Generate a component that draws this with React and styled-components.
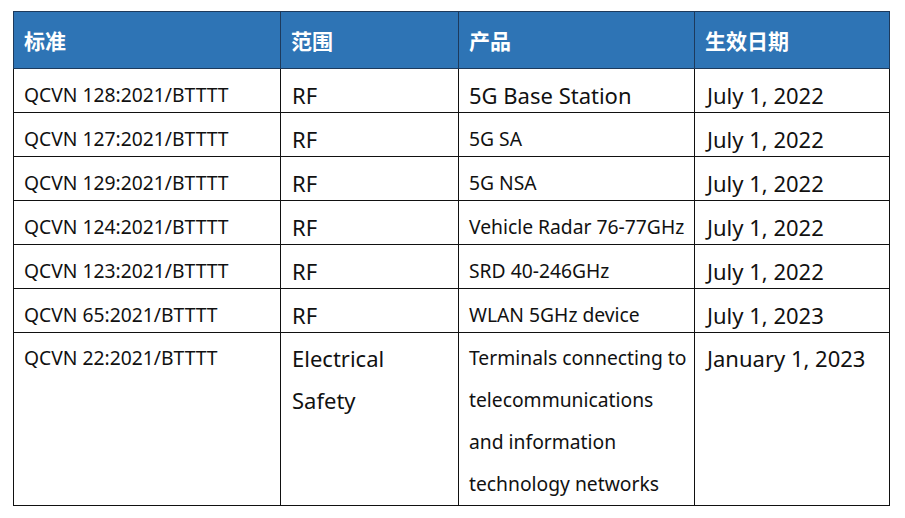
import styled, { createGlobalStyle } from 'styled-components';

const GlobalStyle = createGlobalStyle`
  body {
    margin: 0;
    background: #ffffff;
    font-family: "Noto Sans", "Noto Sans CJK SC", sans-serif;
  }
`;

const Page = styled.div`
  padding: 11px 0 0 13px;
`;

const Table = styled.table`
  border-collapse: collapse;
  table-layout: fixed;
  width: 876px;
  color: #111;
`;

const HeadCell = styled.th`
  height: 56px;
  padding: 0 0 0 10px;
  background: #2e74b5;
  border: 1px solid #1d3a5c;
  color: #ffffff;
  font-family: "Noto Sans CJK SC", sans-serif;
  font-size: 21px;
  font-weight: 700;
  text-align: left;
  vertical-align: middle;
`;

// single rows are 44px tall; the last row stacks 42px lines
const Cell = styled.td`
  padding: ${(p) => (p.$multi ? 4 : 9)}px 0 0 ${(p) => p.$pad || 10}px;
  border: 1px solid #111;
  font-size: ${(p) => (p.$big ? 22 : 19.3)}px;
  line-height: ${(p) => (p.$multi ? 42 : 34)}px;
  vertical-align: top;
  white-space: nowrap;
`;

const columns = [
  { title: '标准', width: 267 },
  { title: '范围', width: 178 },
  { title: '产品', width: 236 },
  { title: '生效日期', width: 195 },
];

const rows = [
  ['QCVN 128:2021/BTTTT', 'RF', '5G Base Station', 'July 1, 2022', true],
  ['QCVN 127:2021/BTTTT', 'RF', '5G SA', 'July 1, 2022'],
  ['QCVN 129:2021/BTTTT', 'RF', '5G NSA', 'July 1, 2022'],
  ['QCVN 124:2021/BTTTT', 'RF', 'Vehicle Radar 76-77GHz', 'July 1, 2022'],
  ['QCVN 123:2021/BTTTT', 'RF', 'SRD 40-246GHz', 'July 1, 2022'],
  ['QCVN 65:2021/BTTTT', 'RF', 'WLAN 5GHz device', 'July 1, 2023'],
];

export default function App() {
  return (
    <Page>
      <GlobalStyle />
      <Table>
        <colgroup>
          {columns.map((c) => (
            <col key={c.title} style={{ width: c.width }} />
          ))}
        </colgroup>
        <thead>
          <tr>
            {columns.map((c) => (
              <HeadCell key={c.title}>{c.title}</HeadCell>
            ))}
          </tr>
        </thead>
        <tbody>
          {rows.map(([std, scope, product, date, bigProduct]) => (
            <tr key={std}>
              <Cell>{std}</Cell>
              <Cell $big $pad={11}>{scope}</Cell>
              <Cell $big={bigProduct}>{product}</Cell>
              <Cell $big $pad={12}>{date}</Cell>
            </tr>
          ))}
          <tr>
            <Cell $multi>QCVN 22:2021/BTTTT</Cell>
            <Cell $multi $big $pad={11}>
              Electrical
              <br />
              Safety
            </Cell>
            <Cell $multi>
              Terminals connecting to
              <br />
              telecommunications
              <br />
              and information
              <br />
              technology networks
            </Cell>
            <Cell $multi $big $pad={12}>January 1, 2023</Cell>
          </tr>
        </tbody>
      </Table>
    </Page>
  );
}
